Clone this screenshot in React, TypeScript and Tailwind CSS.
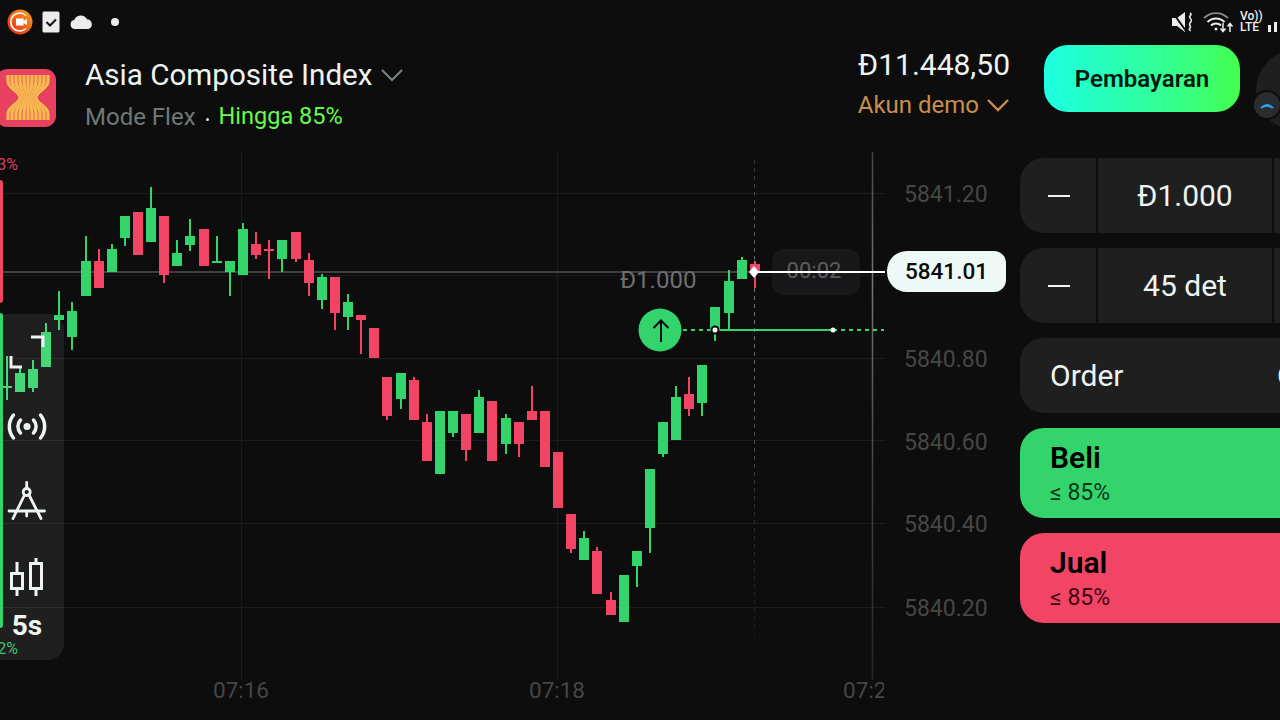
import React from "react";

type C = [number, number, number, number, number, "g" | "r"];
const candles: C[] = [
  [7, 386, 388, 356, 400, "g"], [20, 373, 392, 368, 392, "g"], [33, 369, 388, 360, 392, "g"], [46, 332, 367, 323, 367, "g"],
  [59, 315, 320, 291, 330, "g"], [72, 311, 337, 302, 350, "g"], [86, 261, 296, 236, 296, "g"], [99, 261, 288, 249, 288, "r"],
  [112, 249, 272, 244, 272, "g"], [125, 216, 238, 216, 246, "g"], [138, 212, 255, 212, 255, "r"], [151, 208, 242, 187, 242, "g"],
  [164, 216, 275, 216, 283, "r"], [177, 253, 266, 240, 266, "g"], [190, 236, 245, 219, 251, "g"], [204, 229, 266, 229, 266, "r"],
  [217, 261, 262, 236, 262, "g"], [230, 261, 272, 261, 296, "g"], [243, 229, 275, 223, 275, "g"], [256, 244, 255, 232, 259, "r"],
  [269, 249, 251, 240, 279, "r"], [282, 240, 259, 240, 272, "g"], [296, 232, 259, 232, 262, "r"], [309, 260, 283, 253, 296, "r"],
  [322, 277, 300, 274, 309, "g"], [335, 277, 313, 277, 330, "r"], [348, 302, 317, 294, 330, "g"], [361, 315, 320, 315, 354, "r"],
  [374, 328, 358, 328, 358, "r"], [387, 377, 416, 377, 420, "r"], [401, 373, 399, 373, 409, "g"], [414, 380, 420, 377, 420, "r"],
  [427, 422, 461, 414, 461, "r"], [440, 411, 474, 411, 474, "g"], [453, 411, 433, 411, 437, "g"], [466, 414, 450, 414, 461, "r"],
  [479, 397, 433, 390, 433, "g"], [492, 401, 461, 401, 461, "r"], [506, 418, 444, 414, 454, "g"], [519, 422, 444, 422, 457, "r"],
  [532, 411, 420, 386, 420, "r"], [545, 411, 467, 411, 467, "r"], [558, 452, 508, 452, 508, "r"], [571, 514, 549, 514, 553, "r"],
  [584, 538, 560, 531, 560, "g"], [597, 551, 594, 547, 594, "r"], [611, 600, 615, 592, 615, "r"], [624, 575, 622, 575, 622, "g"],
  [637, 551, 566, 551, 587, "g"], [650, 469, 528, 469, 553, "g"], [663, 422, 454, 422, 457, "g"], [676, 397, 440, 386, 440, "g"],
  [689, 394, 409, 377, 416, "r"], [702, 365, 403, 365, 416, "g"], [715, 307, 329, 307, 341, "g"], [729, 281, 313, 270, 329, "g"],
  [742, 260, 279, 257, 279, "g"], [755, 264, 272, 261, 288, "r"],
];
const GREEN = "#34d46c";
const RED = "#f24566";
const AXIS = "#464646";
const prices: [string, number][] = [["5841.20", 194], ["5840.80", 359], ["5840.60", 442], ["5840.40", 524], ["5840.20", 608]];
const grid = [193, 275, 358, 440, 523, 607];

function Chart() {
  return (
    <svg viewBox="0 152 1020 568" className="block w-full h-full">
      <defs>
        <linearGradient id="vl" gradientUnits="userSpaceOnUse" x1="0" y1="152" x2="0" y2="680">
          <stop offset="0" stopColor="#444" />
          <stop offset="0.25" stopColor="#777" />
          <stop offset="0.6" stopColor="#444" />
          <stop offset="1" stopColor="#262626" />
        </linearGradient>
        <linearGradient id="vd" gradientUnits="userSpaceOnUse" x1="0" y1="160" x2="0" y2="640">
          <stop offset="0" stopColor="#333" />
          <stop offset="0.3" stopColor="#777" />
          <stop offset="0.7" stopColor="#333" />
          <stop offset="1" stopColor="#181818" />
        </linearGradient>
        <clipPath id="plot">
          <rect x="0" y="152" width="884" height="568" />
        </clipPath>
      </defs>
      {grid.map((y) => <rect key={y} x="0" y={y} width="885" height="1" fill="#1c1c1c" />)}
      <rect x="241" y="152" width="1" height="528" fill="#1a1a1a" />
      <rect x="557" y="152" width="1" height="528" fill="#1a1a1a" />
      <rect x="0" y="271" width="754" height="2" fill="#3f3f3f" />
      <line x1="872.5" y1="152" x2="872.5" y2="680" stroke="url(#vl)" strokeWidth="1.5" />
      <line x1="754.5" y1="160" x2="754.5" y2="640" stroke="url(#vd)" strokeWidth="1" strokeDasharray="4 4" />
      {candles.map(([x, t, b, wt, wb, c]) => {
        const col = c === "g" ? GREEN : RED;
        return (
          <g key={x} fill={col}>
            <rect x={x - 1} y={wt} width="2" height={wb - wt} />
            <rect x={x - 5} y={t} width="10" height={Math.max(b - t, 2)} />
          </g>
        );
      })}
      <text x="18" y="170" textAnchor="end" fontSize="16" fill="#d93f5c">3%</text>
      <text x="18" y="654" textAnchor="end" fontSize="16" fill="#2fbf62">2%</text>
      {prices.map(([p, y]) => <text key={p} x="904" y={y + 8} fontSize="23" fill={AXIS}>{p}</text>)}
      <text x="241" y="698" textAnchor="middle" fontSize="22.5" fill={AXIS}>07:16</text>
      <text x="557" y="698" textAnchor="middle" fontSize="22.5" fill={AXIS}>07:18</text>
      <text x="843" y="698" fontSize="22.5" fill={AXIS} clipPath="url(#plot)">07:20</text>
      <text x="620" y="288" fontSize="24" fill="#6e6e6e">Đ1.000</text>
      <rect x="772" y="249" width="88" height="46" rx="12" fill="#18181a" />
      <text x="814" y="278" textAnchor="middle" fontSize="22" fill="#5c5c5c">00:02</text>
      <rect x="754" y="271" width="131" height="2" fill="#ffffff" />
      <path d="M754 266l5 6-5 6-5-6z" fill="#ffffff" />
      <line x1="683" y1="330" x2="715" y2="330" stroke={GREEN} strokeWidth="2" strokeDasharray="4 4" />
      <rect x="715" y="329" width="118" height="2" fill={GREEN} />
      <line x1="833" y1="330" x2="884" y2="330" stroke={GREEN} strokeWidth="2" strokeDasharray="4 4" />
      <circle cx="715" cy="330" r="3.5" fill="#fff" stroke="#0d0d0e" strokeWidth="2" />
      <circle cx="833" cy="330" r="2.5" fill="#fff" />
      <circle cx="660" cy="330" r="21.5" fill={GREEN} />
      <path d="M661 342V321M653.500 328L661 320.500L668.500 328" fill="none" stroke="#0a0a0a" strokeWidth="2" />
    </svg>
  );
}

const ic = "block text-[#eef4f2]";

function Toolbar() {
  return (
    <div className="absolute left-0 top-[162px] w-[64px] h-[346px] bg-white/[0.08] rounded-r-2xl flex flex-col items-start">
      <div className="h-[75px] w-full shrink-0">
        <svg width="54" height="75" viewBox="0 0 54 75" className={ic} fill="none" stroke="currentColor" strokeWidth="3">
          <path d="M31 23H43V33M11 42V53H22" />
        </svg>
      </div>
      <div className="h-[75px] w-full shrink-0">
        <svg width="54" height="75" viewBox="0 0 54 75" className={ic} fill="none" stroke="currentColor" strokeWidth="3.500" strokeLinecap="round">
          <circle cx="27" cy="37.500" r="3.500" fill="currentColor" stroke="none" />
          <path d="M20.500 31a9.500 9.500 0 0 0 0 13M33.500 31a9.500 9.500 0 0 1 0 13M13.500 26a18 18 0 0 0 0 23M40.500 26a18 18 0 0 1 0 23" />
        </svg>
      </div>
      <div className="h-[75px] w-full shrink-0">
        <svg width="54" height="75" viewBox="0 0 54 75" className={ic} fill="none" stroke="currentColor" strokeWidth="2.800" strokeLinecap="round">
          <circle cx="26.700" cy="28" r="3.500" />
          <path d="M26.700 18.500V24M24.500 31L13 54.500M29 31L41 54.500M9 47H44.500M26.700 47V52" />
        </svg>
      </div>
      <div className="h-[75px] w-full shrink-0">
        <svg width="54" height="75" viewBox="0 0 54 75" className={ic} fill="none" stroke="currentColor" strokeWidth="3">
          <rect x="11.500" y="34.500" width="11" height="15" />
          <rect x="30.500" y="24.500" width="11" height="25" />
          <path d="M17 23V34M17 50V57M36 19V24M36 50V57" />
        </svg>
      </div>
      <div className="w-[54px] text-center text-[28px] leading-6 font-bold text-[#eef4f2]">5s</div>
    </div>
  );
}

function Logo() {
  const stalks = Array.from({ length: 11 }, (_, i) => i);
  const curve = (t: number, w: number) => `M${t} 6V12C${t} 20 ${w} 22 ${w} 28.500C${w} 35 ${t} 37 ${t} 45V51`;
  return (
    <svg width="56" height="58" viewBox="0 0 56 58" className="block shrink-0">
      <rect x="-4" y="0" width="60" height="58" rx="11" fill="#e8405f" />
      {stalks.map((i) => (
        <path key={i} d={curve(8 + i * 4, 20 + i * 1.6)} fill="none" stroke="#f7bb52" strokeWidth="3.200" />
      ))}
      {stalks.slice(0, 10).map((i) => (
        <path key={i} d={curve(10 + i * 4, 20.800 + i * 1.6)} fill="none" stroke="#ee8f4a" strokeWidth="0.500" />
      ))}
    </svg>
  );
}

function StatusBar() {
  return (
    <div className="h-[44px] shrink-0 flex items-center justify-between">
      <div className="flex items-center pl-[7px]">
        <svg width="26" height="26" viewBox="0 0 26 26" className="block">
          <defs>
            <linearGradient id="rec" x1="0" y1="1" x2="1" y2="0">
              <stop offset="0" stopColor="#e2231a" />
              <stop offset="1" stopColor="#f9a51a" />
            </linearGradient>
          </defs>
          <circle cx="13" cy="13" r="12.500" fill="url(#rec)" />
          <path d="M19 6.500A9 9 0 1 0 19 19.500" fill="none" stroke="#fff" strokeWidth="1.600" />
          <path d="M9 9.500h7.500v7H9zM16.500 12l3.500-2v6l-3.500-2z" fill="#fff" />
        </svg>
        <svg width="18" height="22" viewBox="0 0 18 22" className="block ml-[9px]">
          <rect x="0.500" y="0.500" width="17" height="21" rx="1.500" fill="#ececec" />
          <path d="M4.500 11l3.500 3.500 6-6" fill="none" stroke="#111" strokeWidth="2" />
        </svg>
        <svg width="24" height="14" viewBox="0 0 24 14" className="block ml-[10px]">
          <path d="M5 14a4.500 4.500 0 0 1-.800-8.900A7 7 0 0 1 17 4.300 5 5 0 0 1 18.500 14z" fill="#ececec" />
        </svg>
        <div className="ml-[17px] w-[8px] h-[8px] rounded-full bg-[#ececec]" />
      </div>
      <div className="flex items-center gap-[6px] mr-[-3px]">
        <svg width="22" height="20" viewBox="0 0 22 20" className="block">
          <path d="M0 6h5L13 0v20l-8-6H0z" fill="#eee" />
          <path d="M1 1l13 18" stroke="#0d0d0e" strokeWidth="2" />
          <path d="M18 1c3 2-2 3 0 5s2 3 0 5 2 3 0 5 1 2 0 3" fill="none" stroke="#eee" strokeWidth="1.600" />
        </svg>
        <svg width="31" height="22" viewBox="0 0 31 22" className="block ml-[3px]">
          <path d="M1 7a17 17 0 0 1 24 0" fill="none" stroke="#8a8a8a" strokeWidth="1.800" />
          <path d="M4.500 11a12 12 0 0 1 17 0M8 14.500a7 7 0 0 1 10 0" fill="none" stroke="#eee" strokeWidth="2" />
          <circle cx="13" cy="18" r="1.500" fill="#eee" />
          <path d="M20 12v8M17.500 17.500L20 20.500l2.500-3M27 21v-8M24.500 15.500L27 12.500l2.500 3" fill="none" stroke="#eee" strokeWidth="1.500" />
        </svg>
        <div className="flex flex-col items-start text-[#eee] text-[12px] leading-[11px] font-medium w-[22px]">
          <span>Vo))</span>
          <span>LTE</span>
        </div>
        <div className="flex items-end gap-[3px] h-[20px]">
          <div className="w-[3px] h-[7px] bg-[#eee]" />
          <div className="w-[3px] h-[10px] bg-[#eee]" />
          <div className="w-[3px] h-[16px] bg-[#eee]" />
        </div>
      </div>
    </div>
  );
}

function Header() {
  return (
    <div className="h-[108px] w-[1336px] shrink-0 flex items-start">
      <div className="mt-[25px]"><Logo /></div>
      <div className="ml-[29px] mt-[13px] flex flex-col">
        <div className="flex items-center h-[36px] text-[29.6px] text-[#eef4f2]">
          Asia Composite Index
          <svg width="24" height="14" viewBox="0 0 24 14" className="block ml-[8px]">
            <path d="M2 2l10 10L22 2" fill="none" stroke="#7c8484" strokeWidth="2" />
          </svg>
        </div>
        <div className="flex items-center h-[28px] mt-[10px] text-[24px]">
          <span className="text-[#6f7877]">Mode Flex</span>
          <span className="w-[3px] h-[3px] rounded-full bg-[#dfe5e3] mx-[10px] mt-[5px]" />
          <span className="text-[#69f94c] text-[23.5px]">Hingga 85%</span>
        </div>
      </div>
      <div className="ml-auto mt-[2px] flex flex-col items-end">
        <div className="h-[36px] flex items-center text-[30px] text-[#eef4f2]">Đ11.448,50</div>
        <div className="h-[28px] mt-[9px] flex items-center text-[24px] text-[#c98f4e]">
          Akun demo
          <svg width="24" height="14" viewBox="0 0 24 14" className="block ml-[7px]">
            <path d="M2 2l10 10L22 2" fill="none" stroke="#c98f4e" strokeWidth="2.400" />
          </svg>
        </div>
      </div>
      <div className="ml-[34px] mt-[1px] w-[196px] h-[67px] shrink-0 rounded-[24px] bg-gradient-to-r from-[#1dffe2] to-[#42ff4a] flex items-center justify-center text-[24px] font-semibold text-[#021a10]">
        Pembayaran
      </div>
      <div className="relative ml-[16px] mt-[6px] w-[80px] h-[80px] shrink-0 rounded-full bg-[#1f1f1f]">
        <div className="absolute left-[-4px] top-[40px] w-[30px] h-[30px] rounded-full bg-[#2a2c2e] border-2 border-[#0d0d0e] flex items-center justify-center">
          <svg width="16" height="8" viewBox="0 0 16 8" className="block">
            <path d="M1 6.500Q8-.5 15 6.500L13 7.500Q8 4 3 7.500z" fill="#2a9df4" />
          </svg>
        </div>
      </div>
    </div>
  );
}

function Stepper({ value }: { value: string }) {
  return (
    <div className="h-[75px] flex gap-[2px] text-[30px] text-[#eef4f2]">
      <div className="w-[76px] shrink-0 bg-[#1f1f1f] rounded-l-[24px] flex items-center justify-center pl-[1px]">
        <div className="w-[22px] h-[2px] bg-[#eef4f2]" />
      </div>
      <div className="w-[174px] shrink-0 bg-[#1f1f1f] flex items-center justify-center">{value}</div>
      <div className="flex-1 bg-[#1f1f1f]" />
    </div>
  );
}

export default function App() {
  return (
    <div className="w-[1280px] h-[720px] overflow-hidden bg-[#0d0d0e] flex flex-col [font-family:Roboto,sans-serif]">
      <StatusBar />
      <Header />
      <div className="flex-1 flex min-h-0">
        <div className="relative w-[1020px] shrink-0">
          <Chart />
          <Toolbar />
          <div className="absolute left-0 top-[28px] w-[3px] h-[123px] bg-[#f24566] rounded-r-sm" />
          <div className="absolute left-0 top-[161px] w-[3px] h-[315px] bg-[#34d46c] rounded-r-sm" />
          <div className="absolute left-[887px] top-[99px] w-[119px] h-[41px] bg-[#eef8f6] rounded-l-[20px] rounded-r-xl flex items-center justify-center text-[22.5px] font-medium text-[#0a0a0a]">
            5841.01
          </div>
        </div>
        <div className="w-[300px] shrink-0 pt-[6px] flex flex-col gap-[15px]">
          <Stepper value="Đ1.000" />
          <Stepper value="45 det" />
          <div className="h-[75px] bg-[#1f1f1f] rounded-l-[24px] flex items-center pl-[30px] text-[30px] text-[#eef4f2]">
            <span className="w-[227px] shrink-0">Order</span>
            <span>O</span>
          </div>
          <div className="h-[90px] bg-[#34d46c] rounded-l-[24px] pl-[30px] pt-[13px] flex flex-col text-black">
            <div className="text-[30px] leading-[34px] font-semibold">Beli</div>
            <div className="text-[23px] leading-[36px] text-[#06351a]">≤ 85%</div>
          </div>
          <div className="h-[90px] bg-[#f24566] rounded-l-[24px] pl-[30px] pt-[13px] flex flex-col text-black">
            <div className="text-[30px] leading-[34px] font-semibold">Jual</div>
            <div className="text-[23px] leading-[36px] text-[#3f0713]">≤ 85%</div>
          </div>
        </div>
      </div>
    </div>
  );
}
